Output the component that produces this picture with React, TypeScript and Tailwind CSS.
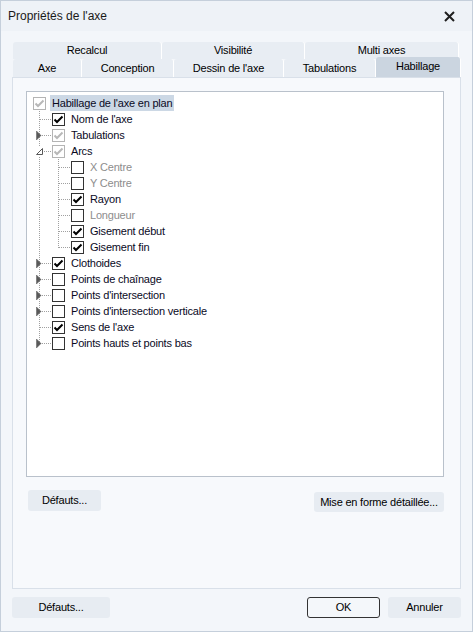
import React from "react";

type State = "on" | "off" | "grey";

type Node = {
  label: string;
  state: State;
  dim?: boolean;
  toggle?: "collapsed" | "expanded";
  children?: Node[];
};

const items: Node[] = [
  { label: "Nom de l'axe", state: "on" },
  { label: "Tabulations", state: "grey", toggle: "collapsed" },
  {
    label: "Arcs",
    state: "grey",
    toggle: "expanded",
    children: [
      { label: "X Centre", state: "off", dim: true },
      { label: "Y Centre", state: "off", dim: true },
      { label: "Rayon", state: "on" },
      { label: "Longueur", state: "off", dim: true },
      { label: "Gisement début", state: "on" },
      { label: "Gisement fin", state: "on" },
    ],
  },
  { label: "Clothoides", state: "on", toggle: "collapsed" },
  { label: "Points de chaînage", state: "off", toggle: "collapsed" },
  { label: "Points d'intersection", state: "off", toggle: "collapsed" },
  { label: "Points d'intersection verticale", state: "off", toggle: "collapsed" },
  { label: "Sens de l'axe", state: "on" },
  { label: "Points hauts et points bas", state: "off", toggle: "collapsed" },
];

const Check = ({ state }: { state: State }) => {
  const grey = state === "grey";
  return (
    <span
      className={`w-[13px] h-[13px] shrink-0 bg-white border flex items-center justify-center ${
        grey ? "border-[#b4b4b4]" : "border-[#333333]"
      }`}
    >
      {state !== "off" && (
        <svg width="11" height="11" viewBox="0 0 11 11">
          <path
            d="M1.5 5.5 L4 8 L9.5 2.5"
            fill="none"
            stroke={grey ? "#b8b8b8" : "#000000"}
            strokeWidth="2"
          />
        </svg>
      )}
    </span>
  );
};

// one 19px column of the tree gutter
const Gutter = ({
  line,
  branch,
  last,
  toggle,
}: {
  line?: boolean;
  branch?: boolean;
  last?: boolean;
  toggle?: "collapsed" | "expanded";
}) => (
  <svg width="19" height="16" className="shrink-0" shapeRendering="crispEdges">
    {line && (
      <line x1="6.5" y1="0" x2="6.5" y2="16" stroke="#a0a0a0" strokeDasharray="1 1" />
    )}
    {branch && (
      <>
        <line x1="6.5" y1="0" x2="6.5" y2={last ? 9 : 16} stroke="#a0a0a0" strokeDasharray="1 1" />
        <line x1="7" y1="8.5" x2="19" y2="8.5" stroke="#a0a0a0" strokeDasharray="1 1" />
      </>
    )}
    {toggle === "collapsed" && (
      <path d="M3.5 4 L8 8.5 L3.5 13 Z" fill="#595959" stroke="#595959" strokeWidth="0.5" shapeRendering="auto" />
    )}
    {toggle === "expanded" && (
      <>
        <rect x="2" y="4" width="8" height="9" fill="#ffffff" />
        <path d="M9.5 5.5 L9.5 11.5 L3.5 11.5 Z" fill="#ffffff" stroke="#595959" strokeWidth="1" shapeRendering="auto" />
      </>
    )}
  </svg>
);

const Label = ({ text, dim, selected }: { text: string; dim?: boolean; selected?: boolean }) => (
  <span
    className={`ml-[4px] px-[2px] h-[16px] leading-[16px] whitespace-nowrap ${
      selected ? "bg-[#ccd8e5]" : ""
    } ${dim ? "text-[#8d8d8d]" : "text-[#0a0a1e]"}`}
  >
    {text}
  </span>
);

const Tab = ({ label, w, active }: { label: string; w: string; active?: boolean }) => (
  <div
    className={`${w} shrink-0 flex justify-center rounded-t-[3px] border-r border-white ${
      active
        ? "bg-[#cbd5e0] h-[20px] -mt-[2px] items-start pt-[1px]"
        : "bg-[#e8edf3] h-full items-center"
    }`}
  >
    {label}
  </div>
);

const Btn = ({ label, cls }: { label: string; cls: string }) => (
  <button className={`${cls} bg-[#e7ecf2] rounded-[3px] flex items-center justify-center text-[#000]`}>
    {label}
  </button>
);

export default function App() {
  return (
    <div className="w-[473px] h-[632px] border border-[#c5cfdb] bg-[#f3f6fa] flex flex-col font-['Liberation_Sans',Arial,sans-serif] text-[11px] tracking-[-0.2px] text-black">
      <div className="h-[30px] flex items-center justify-between pl-[7px] pr-[17px] bg-[#eef2f7]">
        <span className="text-[12px] tracking-[0px] text-[#1a1a1a]">Propriétés de l'axe</span>
        <svg width="11" height="11" viewBox="0 0 11 11">
          <path d="M1 1 L10 10 M10 1 L1 10" stroke="#1f1f1f" strokeWidth="2" />
        </svg>
      </div>

      <div className="flex-1 flex flex-col px-[11px]">
        <div className="mt-[11px] ml-px mr-[2px] h-[17px] flex">
          <Tab label="Recalcul" w="w-[149px]" />
          <Tab label="Visibilité" w="w-[143px]" />
          <Tab label="Multi axes" w="w-[154px]" />
        </div>
        <div className="ml-px h-[18px] flex">
          <Tab label="Axe" w="w-[69px]" />
          <Tab label="Conception" w="w-[92px]" />
          <Tab label="Dessin de l'axe" w="w-[110px]" />
          <Tab label="Tabulations" w="w-[92px]" />
          <Tab label="Habillage" w="w-[85px]" active />
        </div>

        <div className="h-[512px] border border-[#d9e0e9] bg-[#f7f9fc] pl-[13px] pt-[13px] flex flex-col">
          <div className="w-[418px] h-[386px] border border-[#b9c1cb] bg-white pt-[3px] pl-[6px] flex flex-col">
            <div className="h-[16px] flex items-center">
              <Check state="grey" />
              <Label text="Habillage de l'axe en plan" selected />
            </div>
            {items.map((it, i) => {
              const last = i === items.length - 1;
              return (
                <React.Fragment key={it.label}>
                  <div className="h-[16px] flex items-center">
                    <Gutter branch last={last} toggle={it.toggle} />
                    <Check state={it.state} />
                    <Label text={it.label} dim={it.dim} />
                  </div>
                  {it.children?.map((c, j) => (
                    <div key={c.label} className="h-[16px] flex items-center">
                      <Gutter line={!last} />
                      <Gutter branch last={j === it.children!.length - 1} />
                      <Check state={c.state} />
                      <Label text={c.label} dim={c.dim} />
                    </div>
                  ))}
                </React.Fragment>
              );
            })}
          </div>

          <div className="w-[418px] mt-[13px] flex justify-between items-start">
            <Btn label="Défauts..." cls="ml-[2px] w-[73px] h-[21px]" />
            <Btn label="Mise en forme détaillée..." cls="mt-[2px] w-[130px] h-[20px]" />
          </div>
        </div>

        <div className="mt-[8px] flex">
          <Btn label="Défauts..." cls="w-[98px] h-[21px]" />
          <button className="ml-auto w-[73px] h-[21px] rounded-[3px] border border-[#333] bg-[#f4f7fa] flex items-center justify-center">
            OK
          </button>
          <Btn label="Annuler" cls="ml-[8px] w-[73px] h-[21px]" />
        </div>
      </div>
    </div>
  );
}
